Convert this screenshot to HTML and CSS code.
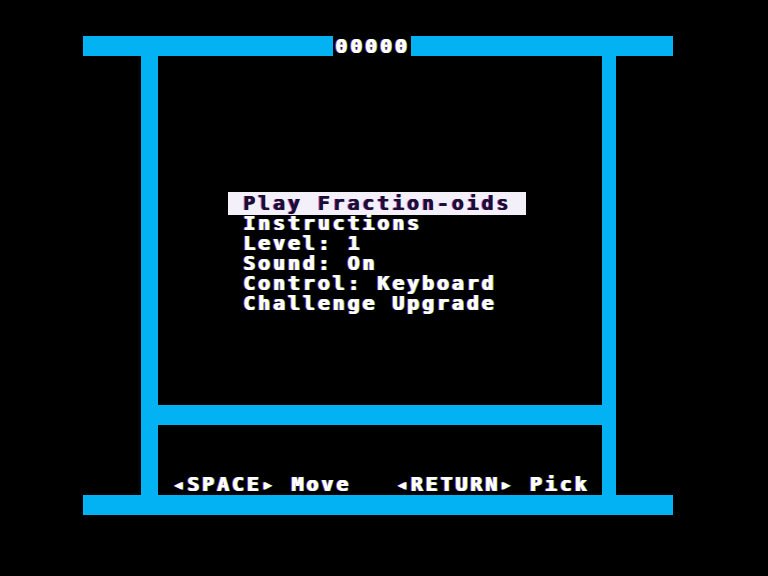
FILE: index.html
```html
<!DOCTYPE html>
<html>
<head>
<meta charset="utf-8">
<link rel="stylesheet" href="styles.css">
</head>
<body>
<div class="screen">
  <div class="frame">
    <div class="bar topbar"><span class="score">00000</span></div>
    <div class="middle">
      <div class="vbar lbar"></div>
      <div class="inner">
        <div class="content">
          <ul class="menu">
            <li class="item selected">Play Fraction-oids</li>
            <li class="item">Instructions</li>
            <li class="item">Level: 1</li>
            <li class="item">Sound: On</li>
            <li class="item">Control: Keyboard</li>
            <li class="item">Challenge Upgrade</li>
          </ul>
        </div>
        <div class="bar midbar"></div>
        <div class="footer"><span class="keys">◂SPACE▸ Move   ◂RETURN▸ Pick</span></div>
      </div>
      <div class="vbar rbar"></div>
    </div>
    <div class="bar bottombar"></div>
  </div>
</div>
</body>
</html>
```

FILE: styles.css
```css
html, body {
  margin: 0;
  padding: 0;
  background: #000;
}

body {
  width: 768px;
  height: 576px;
  overflow: hidden;
  font-family: "DejaVu Sans Mono", "Liberation Mono", monospace;
  font-weight: bold;
  font-size: 20px;
  letter-spacing: 2.86px;
  color: #fff;
}

.screen {
  padding: 36px 0 0 83px;
}

.frame {
  width: 590px;
  display: flex;
  flex-direction: column;
}

.bar {
  background: #02b2f2;
  height: 20px;
}

.topbar {
  display: flex;
  padding-left: 250px;
}

.score {
  background: #000;
  line-height: 20px;
  padding: 0 1px 0 2px;
  text-shadow: 0.8px 0 #fff, -1px 0 rgba(190, 90, 255, 0.8), 1.6px 0 rgba(100, 230, 90, 0.7);
}

.middle {
  display: flex;
  height: 439px;
  padding-left: 58px;
}

.vbar {
  background: #02b2f2;
}

.lbar {
  width: 17px;
}

.rbar {
  width: 14px;
}

.inner {
  width: 444px;
  display: flex;
  flex-direction: column;
}

.content {
  height: 349px;
  padding: 137px 0 0 70px;
  box-sizing: border-box;
}

.menu {
  list-style: none;
  margin: 0;
  padding: 0;
  display: flex;
  flex-direction: column;
  align-items: flex-start;
}

.item {
  line-height: 20px;
  padding: 0 14.9px;
  white-space: pre;
  text-shadow: 0.8px 0 #fff, -1px 0 rgba(190, 90, 255, 0.75), 1.6px 0 rgba(100, 230, 90, 0.65);
}

.item.selected {
  background: #f4f0fa;
  color: #1e0c34;
  margin: -1px 0 -2px;
  padding: 1px 14.9px 2px;
  text-shadow: 0.8px 0 #1e0c34, -1px 0 rgba(150, 60, 220, 0.6);
}

.midbar {
  height: 20px;
}

.footer {
  height: 70px;
  display: flex;
  align-items: flex-end;
  padding: 0 0 1px 14px;
  box-sizing: border-box;
}

.keys {
  line-height: 20px;
  white-space: pre;
  text-shadow: 0.8px 0 #fff, -1px 0 rgba(190, 90, 255, 0.75), 1.6px 0 rgba(100, 230, 90, 0.65);
}
```
